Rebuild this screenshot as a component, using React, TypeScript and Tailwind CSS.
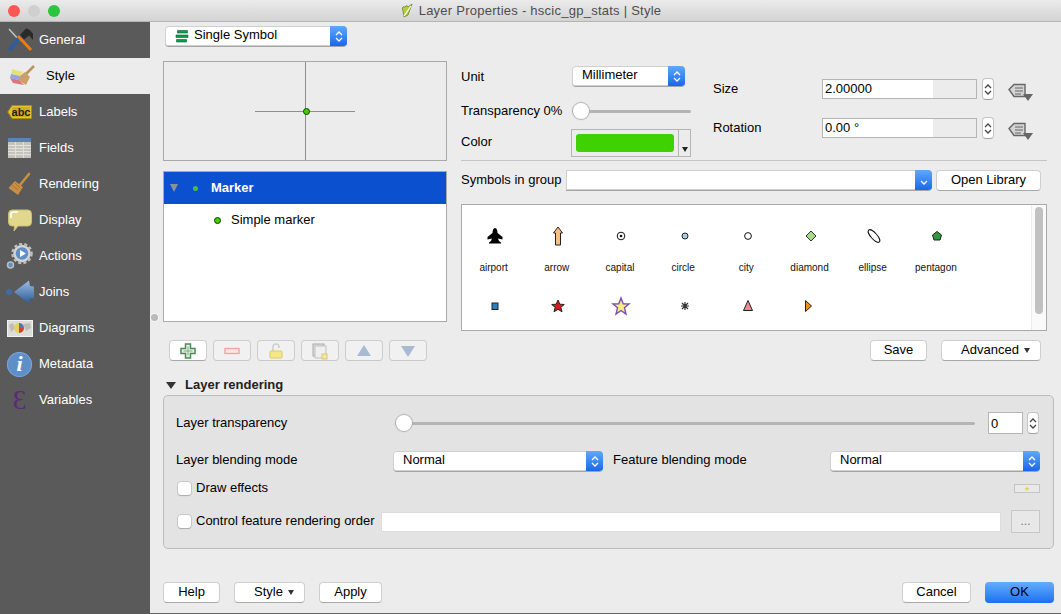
import type { ReactNode } from "react";

function GeneralIcon() {
  return (
    <svg width="26" height="26" viewBox="0 0 26 26">
      <path d="M2 2 L13 14" stroke="#c4c4c4" strokeWidth="1.5" />
      <path d="M14 9 L3.5 21.5" stroke="#2f5d9c" strokeWidth="4.4" strokeLinecap="round" />
      <path d="M11 9 L24 23" stroke="#ef7a10" strokeWidth="3" />
      <path d="M13 8 L19 1.5 Q23 2 26 7 L26 13 L22 8.5 L17 12.5 Z" fill="#2a2a2a" />
    </svg>
  );
}

function StyleIcon() {
  return (
    <svg width="26" height="22" viewBox="0 0 26 22">
      <path d="M2 4 L13 7 L10 11 L1 9 Z" fill="#e9df7c" />
      <path d="M1 9 L10 11 L9 15 L0 13 Z" fill="#8fa8e4" />
      <path d="M0 13 L9 15 L14 20 L3 18 Z" fill="#e2737e" />
      <path d="M15 10 L24 1" stroke="#b9925c" strokeWidth="2.5" />
      <path d="M10 11 L15 7 L20 12 L16 20 L8 15 Z" fill="#c9a06a" />
    </svg>
  );
}

function LabelsIcon() {
  return (
    <svg width="25" height="14" viewBox="0 0 25 14">
      <path d="M5 0.5 H24.5 V13.5 H5 L0.8 7 Z" fill="#e3c52a" stroke="#a88d12" />
      <rect x="5" y="2" width="18" height="10" fill="#cdb01c" />
      <text x="14" y="11" textAnchor="middle" fontSize="11" fontWeight="700" fill="#1d1d1d" fontFamily="Liberation Sans">abc</text>
    </svg>
  );
}

function FieldsIcon() {
  return (
    <svg width="23" height="20" viewBox="0 0 23 20">
      <rect x="0" y="0" width="23" height="20" fill="#c4c4bd" />
      <rect x="0" y="0" width="23" height="4" fill="#5c83b6" />
      <path d="M0 7.5H23M0 10.5H23M0 13.5H23M0 16.5H23" stroke="#e2e2dc" />
      <path d="M7.5 4V20M15.5 4V20" stroke="#e2e2dc" />
    </svg>
  );
}

function RenderingIcon() {
  return (
    <svg width="23" height="25" viewBox="0 0 23 25">
      <path d="M12 13 L21 2" stroke="#c69043" strokeWidth="2.6" strokeLinecap="round" />
      <path d="M7 9 L15 15 L10 23 L0.5 16 Z" fill="#c98f46" />
      <path d="M4 13 L10 18M7 11 L12 16" stroke="#a97330" />
    </svg>
  );
}

function DisplayIcon() {
  return (
    <svg width="24" height="23" viewBox="0 0 24 23">
      <path d="M5 1 H20 Q23.5 1 23.5 5 V13 Q23.5 17 20 17 H10 L6 22 L6.5 17 H4 Q0.5 17 0.5 13 V5 Q0.5 1 4 1 Z" fill="#e2d88d" stroke="#c8bd6d" />
      <path d="M3 9 V5 Q3 3 5.5 3 H10" fill="none" stroke="#fff" strokeWidth="1.6" />
    </svg>
  );
}

function ActionsIcon() {
  return (
    <svg width="27" height="27" viewBox="0 0 27 27">
      <circle cx="16" cy="10.5" r="7.5" fill="#5f8fc6" stroke="#d4d4d4" strokeWidth="2.5" />
      <circle cx="16" cy="10.5" r="9.5" fill="none" stroke="#bdbdbd" strokeWidth="2.5" strokeDasharray="3 2.2" />
      <path d="M14 7 L20 10.5 L14 14 Z" fill="#fff" />
      <circle cx="4.5" cy="22" r="3" fill="#5f8fc6" stroke="#bdbdbd" strokeWidth="1.5" />
    </svg>
  );
}

function JoinsIcon() {
  return (
    <svg width="28" height="24" viewBox="0 0 28 24">
      <defs>
        <linearGradient id="joinGrad" x1="0" y1="0" x2="0" y2="1">
          <stop offset="0" stopColor="#9dbde3" />
          <stop offset="1" stopColor="#2a5a98" />
        </linearGradient>
      </defs>
      <circle cx="3" cy="12" r="3" fill="#3d6ca8" />
      <path d="M8 12 L23 0.5 L24 6 L28 6.5 V18 L24 18.5 L23 23.5 Z" fill="url(#joinGrad)" />
    </svg>
  );
}

function DiagramsIcon() {
  return (
    <svg width="26" height="17" viewBox="0 0 26 17">
      <rect x="0.5" y="0.5" width="25" height="16" fill="#dcdcd8" stroke="#f2f2f2" />
      <path d="M16 4 L23 3 L24 8 L19 11 Z M2 5 L6 3 L8 8 L4 12 Z" fill="#bdbdb8" />
      <circle cx="12" cy="8" r="5" fill="#e4d25a" />
      <path d="M12 8 V3 A5 5 0 0 1 17 8 Z" fill="#4d78b5" />
      <path d="M12 8 H17 A5 5 0 0 1 12 13 Z" fill="#d4402f" />
    </svg>
  );
}

function MetadataIcon() {
  return (
    <div className="flex h-[25px] w-[25px] items-center justify-center rounded-full bg-[#5f8fc9] font-['Liberation_Serif',serif] text-[22px] font-bold italic leading-none text-white shadow-[inset_0_0_0_1px_#7aa4d8]">
      i
    </div>
  );
}

function VariablesIcon() {
  return (
    <span className="font-['Liberation_Serif',serif] text-[28px] leading-none text-[#5a2c78]">Ɛ</span>
  );
}

const navItems: { label: string; icon: ReactNode; active?: boolean }[] = [
  { label: "General", icon: <GeneralIcon /> },
  { label: "Style", icon: <StyleIcon />, active: true },
  { label: "Labels", icon: <LabelsIcon /> },
  { label: "Fields", icon: <FieldsIcon /> },
  { label: "Rendering", icon: <RenderingIcon /> },
  { label: "Display", icon: <DisplayIcon /> },
  { label: "Actions", icon: <ActionsIcon /> },
  { label: "Joins", icon: <JoinsIcon /> },
  { label: "Diagrams", icon: <DiagramsIcon /> },
  { label: "Metadata", icon: <MetadataIcon /> },
  { label: "Variables", icon: <VariablesIcon /> },
];

function Sidebar() {
  return (
    <div className="flex w-[150px] shrink-0 flex-col bg-[#5a5a5a]">
      {navItems.map((item) => (
        <div
          key={item.label}
          className={`flex h-9 items-center ${item.active ? "bg-[#ececec] text-black" : "font-medium text-white"}`}
        >
          <div className={`flex w-[39px] shrink-0 items-center justify-center ${item.active ? "pl-[6px]" : ""}`}>{item.icon}</div>
          <span className={item.active ? "ml-[7px]" : ""}>{item.label}</span>
        </div>
      ))}
    </div>
  );
}

function Chevrons({ color = "white", single = false }: { color?: string; single?: boolean }) {
  return (
    <svg width="8" height="13" viewBox="0 0 8 13" fill="none" stroke={color} strokeWidth="1.3">
      {!single && <path d="M1 5 L4 2 L7 5" />}
      <path d="M1 8 L4 11 L7 8" />
    </svg>
  );
}

function Combo({ text, className, children, single }: { text?: string; className: string; children?: ReactNode; single?: boolean }) {
  return (
    <div className={`flex items-stretch overflow-hidden rounded-[4px] border-b border-b-[#a4a4a4] bg-white shadow-[inset_0_0_0_1px_#d0d0d0] ${className}`}>
      <div className="flex flex-1 items-center pb-[3px] pl-[10px] leading-none">
        {children}
        {text}
      </div>
      <div className="flex w-[17px] items-center justify-center bg-gradient-to-b from-[#5fa8fb] to-[#1768e8]">
        <Chevrons single={single} />
      </div>
    </div>
  );
}

function MacButton({ children, className, disabled, icon }: { children: ReactNode; className: string; disabled?: boolean; icon?: boolean }) {
  return (
    <div
      className={`flex h-[21px] items-center justify-center rounded-[4px] border border-[#cfcfcf] border-b-[#a8a8a8] leading-none ${
        disabled ? "bg-[#f1f1f1] border-b-[#c8c8c8]" : "bg-white"
      } ${icon ? "" : "pb-[3px]"} ${className}`}
    >
      {children}
    </div>
  );
}

function Caret() {
  return <span className="ml-[5px] mt-[3px] h-0 w-0 border-x-[3.5px] border-t-[5px] border-x-transparent border-t-[#333]" />;
}

function Spin({ className = "" }: { className?: string }) {
  return (
    <div className={`flex h-[22px] w-[12px] shrink-0 items-center justify-center rounded-[4px] border border-[#c4c4c4] border-b-[#a0a0a0] bg-white ${className}`}>
      <Chevrons color="#444" />
    </div>
  );
}

function DefinedIcon() {
  return (
    <svg width="25" height="18" viewBox="0 0 25 18" className="ml-[14px] mt-[5px] shrink-0">
      <path d="M1 6.5 L6 1.5 H17 V13.5 H6 Z" fill="#d4d4d4" stroke="#666" strokeWidth="1.4" />
      <path d="M7 5 H15 M7 8 H15 M7 11 H13" stroke="#666" strokeWidth="1.2" />
      <path d="M15 11 H25 L20 18 Z" fill="#666" />
    </svg>
  );
}

function NumberField({ value }: { value: string }) {
  return (
    <div className="flex h-[20px] w-[155px] shrink-0 border border-[#b5b5b5] bg-white leading-none">
      <span className="flex flex-1 items-center pb-[2px] pl-[2px]">{value}</span>
      <span className="w-[43px] bg-[#ececec]" />
    </div>
  );
}

function Slider({ className, thumbClass }: { className: string; thumbClass: string }) {
  return (
    <div className={`relative h-[3px] rounded-full bg-[#b4b4b4] ${className}`}>
      <span className={`absolute top-[-7px] h-[16px] w-[16px] rounded-full bg-white shadow-[0_0_1px_1px_#b0b0b0] ${thumbClass}`} />
    </div>
  );
}

const symbols: { name: string; shape?: ReactNode }[] = [
  { name: "airport", shape: <path d="M12 4 Q14.5 4.5 14.5 9 L19.5 13 V15.5 L15 14.5 L16 17 L18 18.5 V19.5 H6 V18.5 L8 17 L9 14.5 L4.5 15.5 V13 L9.5 9 Q9.5 4.5 12 4 Z" fill="#000" /> },
  { name: "arrow", shape: <path d="M12 3 L16.5 9 H14.5 V21 H9.5 V9 H7.5 Z" fill="#f6c083" stroke="#222" strokeWidth="1" /> },
  { name: "capital", shape: <g><circle cx="12" cy="12" r="3.8" fill="#fff" stroke="#111" /><circle cx="12" cy="12" r="1.3" fill="#111" /></g> },
  { name: "circle", shape: <circle cx="12" cy="12" r="3" fill="#a6cee3" stroke="#222" /> },
  { name: "city", shape: <circle cx="12" cy="12" r="3.4" fill="#fff" stroke="#111" /> },
  { name: "diamond", shape: <path d="M12 7 L17 12 L12 17 L7 12 Z" fill="#a8d98a" stroke="#333" /> },
  { name: "ellipse", shape: <ellipse cx="12" cy="12" rx="8" ry="3" transform="rotate(48 12 12)" fill="#fff" stroke="#111" /> },
  { name: "pentagon", shape: <path d="M12 7.5 L16.5 11 L15 16 H9 L7.5 11 Z" fill="#2f9a3a" stroke="#222" /> },
  { name: "", shape: <rect x="9" y="9" width="6" height="6.5" fill="#2a7fc0" stroke="#222" /> },
  { name: "", shape: <path d="M12 6 L13.8 10.2 L18.3 10.5 L14.8 13.3 L16 17.8 L12 15.3 L8 17.8 L9.2 13.3 L5.7 10.5 L10.2 10.2 Z" fill="#d61c1c" stroke="#222" /> },
  { name: "", shape: <path d="M12 4 L14.2 9.8 L20 10 L15.5 13.8 L17 20 L12 16.5 L7 20 L8.5 13.8 L4 10 L9.8 9.8 Z" fill="#f4ee7a" stroke="#7a4fb0" strokeWidth="1.4" /> },
  { name: "", shape: <path d="M12 8 V16 M8 12 H16 M9 9 L15 15 M15 9 L9 15" stroke="#333" strokeWidth="1.2" /> },
  { name: "", shape: <path d="M12 6.5 L16.5 16.5 H7.5 Z" fill="#ee8a90" stroke="#222" /> },
  { name: "", shape: <path d="M6.5 6.5 L12.5 12 L6.5 17.5 Z" fill="#f58b0a" stroke="#222" /> },
];

function SymbolList() {
  return (
    <div className="relative mt-[13px] h-[127px] overflow-hidden border border-[#a9a9a9] bg-white">
      <div className="ml-[1.5px] grid grid-cols-[repeat(8,63.2px)]">
        {symbols.map((s, i) => (
          <div key={i} className="flex h-[70px] flex-col items-center pt-[19px]">
            <svg width="24" height="24" viewBox="0 0 24 24" className="shrink-0">{s.shape}</svg>
            {s.name && <span className="mr-[3px] mt-[13px] h-[14px] text-[10px] leading-[14px] text-[#111]">{s.name}</span>}
          </div>
        ))}
      </div>
      <div className="absolute inset-y-0 right-0 w-[15px] border-l border-[#ececec] bg-[#fafafa]">
        <div className="ml-[3px] mt-[2px] h-[107px] w-[8px] rounded-full bg-[#c1c1c1]" />
      </div>
    </div>
  );
}

function Check() {
  return <span className="ml-[2px] h-[13px] w-[13px] shrink-0 rounded-[3px] bg-white shadow-[0_0_0_0.5px_#b0b0b0,0_1px_1px_#aaa]" />;
}

function ToolIcon({ children, disabled }: { children: ReactNode; disabled?: boolean }) {
  return (
    <MacButton className="w-[38px]" disabled={disabled} icon>
      <svg width="18" height="18" viewBox="0 0 18 18">{children}</svg>
    </MacButton>
  );
}

function SymbolPanel() {
  return (
    <div className="flex w-[284px] shrink-0 flex-col">
      <div className="relative h-[100px] border border-[#a9a9a9] bg-[#ececec]">
        <span className="absolute inset-y-0 left-[141px] w-px bg-[#8f8f8f]" />
        <span className="absolute left-[91px] top-[49px] h-px w-[100px] bg-[#8f8f8f]" />
        <span className="absolute left-[139px] top-[46px] h-[7px] w-[7px] rounded-full border border-[#173f00] bg-[#3fd102]" />
      </div>
      <div className="mt-[10px] h-[151px] border border-[#a9a9a9] bg-white">
        <div className="flex h-[32px] items-center bg-[#0b50ce] font-bold text-white">
          <span className="ml-[6px] h-0 w-0 border-x-[4.5px] border-t-[8px] border-x-transparent border-t-[#8d9299]" />
          <span className="ml-[15px] h-[5px] w-[5px] rounded-full bg-[#49c030]" />
          <span className="ml-[13px]">Marker</span>
        </div>
        <div className="flex h-[32px] items-center">
          <span className="ml-[50px] h-[7px] w-[7px] rounded-full border border-[#123800] bg-[#3fd102]" />
          <span className="ml-[10px]">Simple marker</span>
        </div>
      </div>
      <div className="ml-[6px] mt-[18px] flex gap-[6px]">
        <ToolIcon>
          <path d="M6.5 2 H11.5 V6.5 H16 V11.5 H11.5 V16 H6.5 V11.5 H2 V6.5 H6.5 Z" fill="#e6f1e6" stroke="#4f8a55" strokeWidth="1.5" />
          <path d="M9 4.5 V13.5 M4.5 9 H13.5" stroke="#7eaa82" strokeWidth="1" />
        </ToolIcon>
        <ToolIcon disabled>
          <rect x="2" y="6.5" width="14" height="5" fill="#fbe3e3" stroke="#eea2a2" strokeWidth="1.3" />
        </ToolIcon>
        <ToolIcon disabled>
          <path d="M6 9 V5 Q6 2 9 2 Q12 2 12 5 V6" fill="none" stroke="#cfcfcf" strokeWidth="1.6" />
          <rect x="3" y="9" width="12" height="7" rx="1" fill="#f3e78a" stroke="#dccb62" />
        </ToolIcon>
        <ToolIcon disabled>
          <rect x="2" y="2" width="11" height="12" fill="#dcdcdc" stroke="#a9a9a9" />
          <rect x="4" y="4" width="11" height="12" fill="#efefef" stroke="#c1c1c1" />
          <rect x="11" y="12" width="5" height="5" fill="#f3e9a0" stroke="#d9c964" />
        </ToolIcon>
        <ToolIcon disabled>
          <path d="M9 3 L16 14 H2 Z" fill="#a9bbd3" />
        </ToolIcon>
        <ToolIcon disabled>
          <path d="M2 4 H16 L9 15 Z" fill="#a9bbd3" />
        </ToolIcon>
      </div>
    </div>
  );
}

function PropertiesPanel() {
  return (
    <div className="ml-[14px] flex w-[586px] shrink-0 flex-col">
      <div className="flex h-[99px]">
        <div className="w-[252px] shrink-0">
          <div className="mt-[5px] flex h-[21px] items-center">
            <span className="w-[111px]">Unit</span>
            <Combo text="Millimeter" className="h-[21px] w-[113px]" />
          </div>
          <div className="mt-[13px] flex h-[22px] items-center">
            <span className="w-[111px]">Transparency 0%</span>
            <Slider className="w-[119px]" thumbClass="left-[1px]" />
          </div>
          <div className="mt-[7px] flex h-[28px] items-center">
            <span className="w-[110px] pb-[2px]">Color</span>
            <div className="flex h-[28px] w-[120px] border border-[#b5b5b5] bg-[#ececec]">
              <div className="flex-1 p-[4px]">
                <div className="h-full rounded-[3px] bg-[#3fd102]" />
              </div>
              <div className="flex w-[12px] items-end justify-center border-l border-[#b5b5b5] pb-[4px]">
                <span className="h-0 w-0 border-x-[3.5px] border-t-[5px] border-x-transparent border-t-[#222]" />
              </div>
            </div>
          </div>
        </div>
        <div className="flex-1">
          <div className="mt-[18px] flex h-[20px] items-center">
            <span className="w-[109px]">Size</span>
            <NumberField value="2.00000" />
            <Spin className="ml-[5px]" />
            <DefinedIcon />
          </div>
          <div className="mt-[19px] flex h-[20px] items-center">
            <span className="w-[109px]">Rotation</span>
            <NumberField value="0.00 °" />
            <Spin className="ml-[5px]" />
            <DefinedIcon />
          </div>
        </div>
      </div>
      <div className="h-px bg-[#c4c4c4]" />
      <div className="mt-[8px] flex h-[22px] items-center">
        <span className="w-[105px] shrink-0">Symbols in group</span>
        <Combo className="h-[21px] w-[366px] rounded-l-none" single />
        <MacButton className="ml-[4px] mt-[1px] h-[20px] w-[105px]">Open Library</MacButton>
      </div>
      <SymbolList />
      <div className="mt-[9px] flex justify-end gap-[14px] pr-[6px]">
        <MacButton className="w-[57px]">Save</MacButton>
        <MacButton className="w-[100px] pl-[9px]">
          Advanced
          <Caret />
        </MacButton>
      </div>
    </div>
  );
}

function LayerRendering() {
  return (
    <>
      <div className="mt-[14px] flex h-[20px] items-center font-bold text-[#222]">
        <span className="ml-[3px] h-0 w-0 border-x-[5.5px] border-t-[7px] border-x-transparent border-t-[#333]" />
        <span className="ml-[9px]">Layer rendering</span>
      </div>
      <div className="h-[154px] rounded-[5px] border border-[#bcbcbc] bg-[#e3e3e3] pl-[12px] pr-[13px] pt-[16px]">
        <div className="flex h-[22px] items-center">
          <span className="w-[219px]">Layer transparency</span>
          <Slider className="w-[580px]" thumbClass="left-[1px]" />
          <div className="ml-[13px] flex h-[22px] w-[35px] items-center border border-[#b5b5b5] bg-white pl-[2px] leading-none">0</div>
          <Spin className="ml-[4px]" />
        </div>
        <div className="mt-[17px] flex h-[21px] items-center">
          <span className="w-[217px] pb-[3px]">Layer blending mode</span>
          <Combo text="Normal" className="h-[21px] w-[210px]" />
          <span className="ml-[10px] w-[217px] pb-[3px]">Feature blending mode</span>
          <Combo text="Normal" className="h-[21px] w-[210px]" />
        </div>
        <div className="mt-[7px] flex h-[18px] items-center">
          <Check />
          <span className="ml-[5px]">Draw effects</span>
          <div className="ml-auto flex h-[9px] w-[26px] items-center justify-center border border-[#c4c4c4] bg-[#e9e9e9] text-[7px] leading-none text-[#e6d05a]">★</div>
        </div>
        <div className="mt-[13px] flex h-[23px] items-center">
          <Check />
          <span className="ml-[5px] w-[185px] shrink-0 pb-[1px]">Control feature rendering order</span>
          <div className="h-[20px] w-[620px] border border-[#dcdcdc] bg-white" />
          <div className="ml-[10px] flex h-[23px] w-[29px] items-center justify-center border border-[#c8c8c8] bg-[#e8e8e8] pb-[1px] text-[12px] text-[#777]">...</div>
        </div>
      </div>
    </>
  );
}

export default function App() {
  return (
    <div className="flex h-[614px] w-[1061px] flex-col overflow-hidden bg-[#ececec] font-['Liberation_Sans',sans-serif] text-[13px] text-black">
      <div className="relative flex h-[22px] shrink-0 items-center justify-center border-b border-[#b5b5b5] bg-gradient-to-b from-[#ebebeb] to-[#d3d3d3] text-[#4d4d4d]">
        <div className="absolute left-[8px] flex gap-[8px]">
          <span className="h-[12px] w-[12px] rounded-full bg-[#fc5753]" />
          <span className="h-[12px] w-[12px] rounded-full bg-[#cfcfcf]" />
          <span className="h-[12px] w-[12px] rounded-full bg-[#2dc43e]" />
        </div>
        <svg width="14" height="16" viewBox="0 0 14 16" className="mr-[5px]">
          <path d="M3 8 Q1 3 5 4 Q7 1 8 4 L12 1 L8 12 L4 14 Z" fill="#b5cc3c" stroke="#5b7b20" strokeWidth="0.7" />
          <path d="M4 13 L11 3" stroke="#fff" strokeWidth="1.2" />
        </svg>
        <span className="tracking-[0.25px]">Layer Properties - hscic_gp_stats | Style</span>
      </div>
      <div className="flex min-h-0 flex-1">
        <Sidebar />
        <div className="relative flex-1 border-b border-[#666] pl-[13px] pr-[8px]">
          <span className="absolute left-[1px] top-[292px] h-[7px] w-[7px] rounded-full bg-[#b9b9b9] shadow-[0_0_0_1px_#f5f5f5]" />
          <Combo className="ml-[2px] mt-[4px] h-[21px] w-[182px]">
            <svg width="14" height="14" viewBox="0 0 14 14" className="mr-[5px] mt-[3px]">
              <path d="M2.5 1.5H12.5V4H2.5ZM1 6H13V8.5H1ZM1.5 10.5H11.5V13H1.5Z" fill="#0a9e50" stroke="#0a5c30" strokeWidth="0.6" />
            </svg>
            Single Symbol
          </Combo>
          <div className="mt-[14px] flex">
            <SymbolPanel />
            <PropertiesPanel />
          </div>
          <LayerRendering />
          <div className="mt-[33px] flex">
            <MacButton className="w-[57px]">Help</MacButton>
            <MacButton className="ml-[14px] w-[71px] pl-[9px]">
              Style
              <Caret />
            </MacButton>
            <MacButton className="ml-[14px] w-[63px]">Apply</MacButton>
            <MacButton className="ml-auto w-[69px]">Cancel</MacButton>
            <div className="ml-[14px] flex h-[21px] w-[69px] items-center justify-center rounded-[4px] bg-gradient-to-b from-[#63adfc] to-[#1a6ff0] pb-[3px] leading-none">OK</div>
          </div>
        </div>
      </div>
    </div>
  );
}
